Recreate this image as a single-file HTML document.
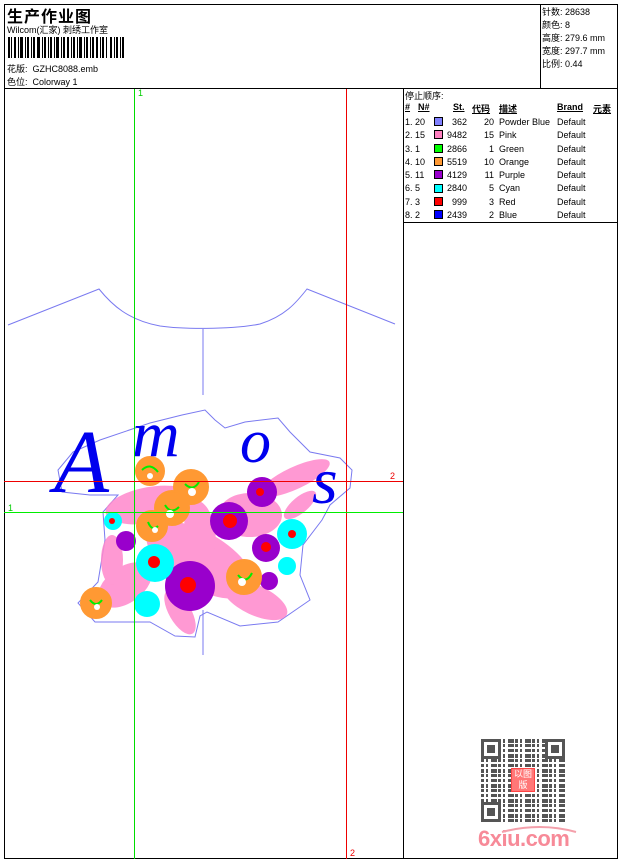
<!DOCTYPE html>
<html><head><meta charset="utf-8"><style>
*{margin:0;padding:0;box-sizing:border-box}
body{width:620px;height:860px;background:#fff;position:relative;overflow:hidden;font-family:"Liberation Sans","WenQuanYi Zen Hei","Noto Sans CJK SC",sans-serif;font-size:9px;color:#000}
.a{position:absolute;white-space:nowrap}
.ln{position:absolute;background:#000}
.sw{position:absolute;width:9px;height:9px;border:1px solid #000}
.qr{position:absolute;left:481px;top:739px;width:84px;height:83px;
background:
repeating-linear-gradient(90deg,transparent 0 3px,#fff 3px 5px,transparent 5px 7px,#fff 7px 10px,transparent 10px 16px,#fff 16px 17px),
repeating-linear-gradient(0deg,#555 0 3px,#fff 3px 4px,#555 4px 8px,#fff 8px 10px,#555 10px 13px,#fff 13px 15px);}
.fd{position:absolute;width:20px;height:20px;border:3px solid #555;background:#fff}
.fd::after{content:"";position:absolute;left:3px;top:3px;width:8px;height:8px;background:#555}
</style></head><body>
<div class="ln" style="left:4px;top:4px;width:614px;height:1px"></div>
<div class="ln" style="left:4px;top:4px;width:1px;height:855px"></div>
<div class="ln" style="left:617px;top:4px;width:1px;height:855px"></div>
<div class="ln" style="left:4px;top:858px;width:614px;height:1px"></div>
<div class="ln" style="left:4px;top:88px;width:614px;height:1px"></div>
<div class="ln" style="left:540px;top:4px;width:1px;height:84px"></div>
<div class="ln" style="left:403px;top:88px;width:1px;height:771px"></div>
<div class="ln" style="left:403px;top:222px;width:215px;height:1px"></div>

<div class="a" style="left:7px;top:3px;font-size:16px;font-weight:bold;letter-spacing:1px">生产作业图</div>
<div class="a" style="left:7px;top:23px;font-size:9px">Wilcom(汇家) 刺绣工作室</div>
<svg class="a" style="left:8px;top:37px" width="118" height="21">
<g fill="#000">
<rect x="0" y="0" width="2" height="21"/><rect x="3" y="0" width="1" height="21"/><rect x="6" y="0" width="2" height="21"/><rect x="10" y="0" width="1" height="21"/><rect x="12" y="0" width="3" height="21"/><rect x="17" y="0" width="1" height="21"/><rect x="19" y="0" width="2" height="21"/><rect x="23" y="0" width="1" height="21"/><rect x="25" y="0" width="2" height="21"/><rect x="29" y="0" width="3" height="21"/><rect x="34" y="0" width="1" height="21"/><rect x="36" y="0" width="2" height="21"/><rect x="40" y="0" width="1" height="21"/><rect x="42" y="0" width="2" height="21"/><rect x="46" y="0" width="1" height="21"/><rect x="48" y="0" width="3" height="21"/><rect x="53" y="0" width="1" height="21"/><rect x="55" y="0" width="2" height="21"/><rect x="59" y="0" width="2" height="21"/><rect x="63" y="0" width="1" height="21"/><rect x="65" y="0" width="2" height="21"/><rect x="69" y="0" width="1" height="21"/><rect x="71" y="0" width="3" height="21"/><rect x="76" y="0" width="1" height="21"/><rect x="78" y="0" width="2" height="21"/><rect x="82" y="0" width="1" height="21"/><rect x="84" y="0" width="2" height="21"/><rect x="88" y="0" width="2" height="21"/><rect x="92" y="0" width="1" height="21"/><rect x="94" y="0" width="2" height="21"/><rect x="98" y="0" width="1" height="21"/><rect x="102" y="0" width="2" height="21"/><rect x="106" y="0" width="1" height="21"/><rect x="108" y="0" width="2" height="21"/><rect x="112" y="0" width="1" height="21"/><rect x="114" y="0" width="2" height="21"/>
</g></svg>
<div class="a" style="left:7px;top:62px">花版:&nbsp; GZHC8088.emb</div>
<div class="a" style="left:7px;top:75px">色位:&nbsp; Colorway 1</div>

<div class="a" style="left:542px;top:6px;line-height:13px">针数: 28638<br>颜色: 8<br>高度: 279.6 mm<br>宽度: 297.7 mm<br>比例: 0.44</div>

<div class="a" style="left:405px;top:89px">停止顺序:</div>
<div class="a" style="left:405px;top:102px;font-weight:bold;text-decoration:underline">#</div>
<div class="a" style="left:418px;top:102px;font-weight:bold;text-decoration:underline">N#</div>
<div class="a" style="left:453px;top:102px;font-weight:bold;text-decoration:underline">St.</div>
<div class="a" style="left:472px;top:102px;font-weight:bold;text-decoration:underline">代码</div>
<div class="a" style="left:499px;top:102px;font-weight:bold;text-decoration:underline">描述</div>
<div class="a" style="left:557px;top:102px;font-weight:bold;text-decoration:underline">Brand</div>
<div class="a" style="left:593px;top:102px;font-weight:bold;text-decoration:underline">元素</div>
<div class="a" style="left:405px;top:116px;line-height:13.3px">1.&nbsp;20<br>2.&nbsp;15<br>3.&nbsp;1<br>4.&nbsp;10<br>5.&nbsp;11<br>6.&nbsp;5<br>7.&nbsp;3<br>8.&nbsp;2</div>
<div class="sw" style="left:434px;top:117px;background:#8080ff"></div>
<div class="sw" style="left:434px;top:130px;background:#ff80c0"></div>
<div class="sw" style="left:434px;top:144px;background:#00ff00"></div>
<div class="sw" style="left:434px;top:157px;background:#ff9933"></div>
<div class="sw" style="left:434px;top:170px;background:#9900cc"></div>
<div class="sw" style="left:434px;top:184px;background:#00ffff"></div>
<div class="sw" style="left:434px;top:197px;background:#ff0000"></div>
<div class="sw" style="left:434px;top:210px;background:#0000ff"></div>
<div class="a" style="left:440px;width:27px;text-align:right;top:116px;line-height:13.3px">362<br>9482<br>2866<br>5519<br>4129<br>2840<br>999<br>2439</div>
<div class="a" style="left:475px;width:19px;text-align:right;top:116px;line-height:13.3px">20<br>15<br>1<br>10<br>11<br>5<br>3<br>2</div>
<div class="a" style="left:499px;top:116px;line-height:13.3px">Powder Blue<br>Pink<br>Green<br>Orange<br>Purple<br>Cyan<br>Red<br>Blue</div>
<div class="a" style="left:557px;top:116px;line-height:13.3px">Default<br>Default<br>Default<br>Default<br>Default<br>Default<br>Default<br>Default</div>

<svg class="a" style="left:0;top:0" width="403" height="860">
<g fill="none" stroke="#7a7af0" stroke-width="1">
<path d="M8 325 L99 289 C112 305 128 320 160 326 C180 329 230 330 260 324 C285 316 296 303 307 289 L395 324"/>
<path d="M203 329 V395"/><path d="M203 610 V655"/>
<path d="M73 452 L100 440 L150 423 L182 415 L205 410 L215 420 L225 428 L245 422 L278 418 L290 432 L310 452 L340 458 L352 470 L350 488 L330 505 L322 520 L303 545 L300 575 L310 600 L278 622 L240 626 L207 612 L200 616 L195 637 L175 636 L150 622 L95 622 L78 603 L98 582 L105 540 L103 512 L118 495 L90 495 L62 492 L58 470 Z"/>
</g>
<g fill="#ff88cc" opacity="0.85">
<ellipse cx="150" cy="505" rx="45" ry="18" transform="rotate(-10 150 505)"/>
<ellipse cx="200" cy="560" rx="60" ry="28" transform="rotate(30 200 560)"/>
<ellipse cx="255" cy="600" rx="35" ry="15" transform="rotate(25 255 600)"/>
<ellipse cx="295" cy="478" rx="38" ry="11" transform="rotate(-25 295 478)"/>
<ellipse cx="125" cy="585" rx="30" ry="18" transform="rotate(-35 125 585)"/>
<ellipse cx="180" cy="612" rx="25" ry="11" transform="rotate(60 180 612)"/>
<ellipse cx="250" cy="515" rx="32" ry="22"/>
<ellipse cx="112" cy="560" rx="11" ry="25"/>
<ellipse cx="300" cy="505" rx="20" ry="8" transform="rotate(-40 300 505)"/>
<ellipse cx="200" cy="530" rx="15" ry="30" transform="rotate(-10 200 530)"/>
</g>
<g fill="#9900cc">
<circle cx="190" cy="586" r="25"/><circle cx="229" cy="521" r="19"/><circle cx="262" cy="492" r="15"/>
<circle cx="266" cy="548" r="14"/><circle cx="126" cy="541" r="10"/><circle cx="269" cy="581" r="9"/>
</g>
<g fill="#00ffff">
<circle cx="155" cy="563" r="19"/><circle cx="147" cy="604" r="13"/><circle cx="292" cy="534" r="15"/>
<circle cx="287" cy="566" r="9"/><circle cx="113" cy="521" r="9"/>
</g>
<g fill="#ff0000">
<circle cx="188" cy="585" r="8"/><circle cx="230" cy="521" r="7"/><circle cx="260" cy="492" r="4"/>
<circle cx="266" cy="547" r="5"/><circle cx="154" cy="562" r="6"/><circle cx="292" cy="534" r="4"/><circle cx="112" cy="521" r="3"/>
</g>
<g fill="#ff9933" stroke="#ff9933" stroke-width="2">
<circle cx="150" cy="471" r="14"/><circle cx="191" cy="487" r="17"/><circle cx="172" cy="508" r="17"/>
<circle cx="152" cy="526" r="15"/><circle cx="244" cy="577" r="17"/><circle cx="96" cy="603" r="15"/>
</g>
<g fill="none" stroke="#00ee00" stroke-width="2">
<path d="M142 470 q8 -8 16 2 M185 484 q8 8 14 -2 M165 505 q6 10 14 2 M148 522 q4 10 10 4 M238 575 q8 10 14 -2 M90 600 q6 8 12 0"/>
</g>
<g fill="#fff"><circle cx="150" cy="476" r="3"/><circle cx="192" cy="492" r="4"/><circle cx="170" cy="514" r="4"/><circle cx="155" cy="530" r="3"/><circle cx="242" cy="582" r="4"/><circle cx="97" cy="607" r="3"/></g>
<g fill="#0000ee" font-family="Liberation Serif" font-style="italic">
<text x="54" y="492" font-size="90">A</text>
<text x="132" y="456" font-size="66">m</text>
<text x="240" y="462" font-size="62">o</text>
<text x="312" y="503" font-size="66">s</text>
</g>
<rect x="134" y="89" width="1" height="770" fill="#00dd00"/>
<rect x="346" y="89" width="1" height="770" fill="#ee0000"/>
<rect x="4" y="481" width="399" height="1" fill="#ee0000"/>
<rect x="4" y="512" width="399" height="1" fill="#00ee00"/>
<text x="138" y="96" font-size="9" fill="#00cc00" font-family="Liberation Sans">1</text>
<text x="8" y="511" font-size="9" fill="#00cc00" font-family="Liberation Sans">1</text>
<text x="390" y="479" font-size="9" fill="#ee0000" font-family="Liberation Sans">2</text>
<text x="350" y="856" font-size="9" fill="#ee0000" font-family="Liberation Sans">2</text>
</svg>

<div class="qr"></div>
<div class="fd" style="left:481px;top:739px"></div>
<div class="fd" style="left:545px;top:739px"></div>
<div class="fd" style="left:481px;top:802px"></div>
<div class="a" style="left:511px;top:768px;width:24px;height:24px;background:#ff7777;border:1px solid #ff4444;color:#fff;font-size:9px;line-height:11px;text-align:center;white-space:normal">以图<br>版</div>
<div class="a" style="left:478px;top:826px;font-size:22px;font-weight:bold;color:#f78a98;letter-spacing:-0.5px">6xiu.com</div>
<svg class="a" style="left:500px;top:824px" width="80" height="10"><path d="M2 8 Q40 -2 76 8" stroke="#f4a0ab" stroke-width="2" fill="none"/></svg>
</body></html>
